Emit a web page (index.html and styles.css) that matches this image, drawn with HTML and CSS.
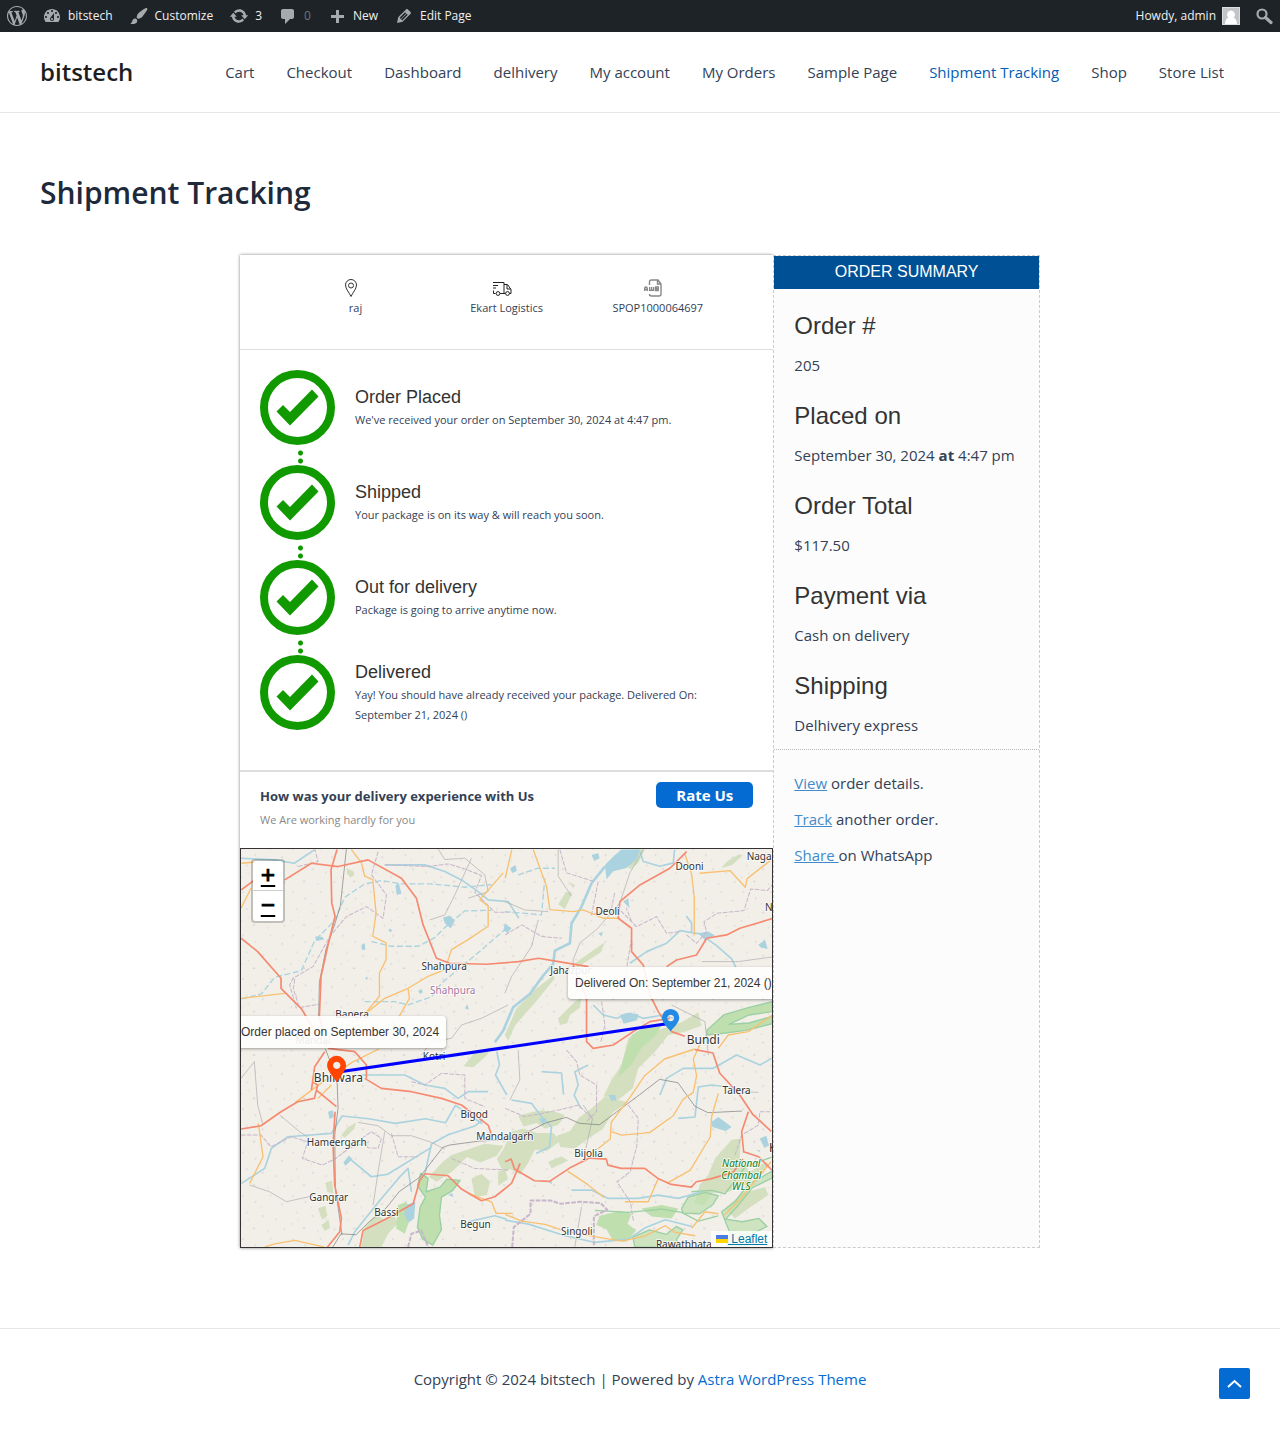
FILE: index.html
```html
<!DOCTYPE html>
<html lang="en">
<head>
<meta charset="utf-8">
<meta name="viewport" content="width=device-width, initial-scale=1">
<title>Shipment Tracking – bitstech</title>
<link rel="stylesheet" href="styles.css">
</head>
<body>
<nav class="adminbar" aria-label="Toolbar">
  <a class="ab-item" href="#" aria-label="About WordPress"><svg width="20" height="20" viewBox="0 0 20 20" fill="#a7aaad"><path d="M20 10c0-5.51-4.49-10-10-10S0 4.49 0 10s4.49 10 10 10 10-4.49 10-10zM7.78 15.37L4.37 6.22c.55-.02 1.17-.08 1.17-.08.5-.06.44-1.13-.06-1.11 0 0-1.45.11-2.37.11-.18 0-.37 0-.58-.01C4.12 2.69 6.87 1.11 10 1.11c2.33 0 4.45.87 6.05 2.34-.68-.11-1.65.39-1.65 1.58 0 .74.45 1.36.9 2.1.35.61.55 1.36.55 2.46 0 1.49-1.4 5-1.4 5l-3.03-8.37c.54-.02.82-.17.82-.17.5-.05.44-1.25-.06-1.22 0 0-1.44.12-2.38.12-.87 0-2.33-.12-2.33-.12-.5-.03-.56 1.2-.06 1.22l.92.08 1.26 3.41zM17.41 10c.24-.64.74-1.87.43-4.25.7 1.29 1.05 2.71 1.05 4.25 0 3.29-1.73 6.24-4.4 7.78.97-2.59 1.94-5.2 2.92-7.78zM6.1 18.09C3.12 16.65 1.11 13.53 1.11 10c0-1.3.23-2.48.72-3.59C3.25 10.3 4.67 14.2 6.1 18.09zm4.03-6.63l2.58 6.98c-.86.29-1.76.45-2.71.45-.79 0-1.57-.11-2.29-.33.81-2.38 1.62-4.74 2.42-7.1z"/></svg></a>
  <a class="ab-item" href="#"><svg width="20" height="20" viewBox="0 0 20 20" fill="#a7aaad"><path d="M3.76 16h12.48c1.1-1.37 1.76-3.11 1.76-5 0-4.42-3.58-8-8-8s-8 3.58-8 8c0 1.89.66 3.63 1.76 5zM10 4c.55 0 1 .45 1 1s-.45 1-1 1-1-.45-1-1 .45-1 1-1zM6 6c.55 0 1 .45 1 1s-.45 1-1 1-1-.45-1-1 .45-1 1-1zm8 0c.55 0 1 .45 1 1s-.45 1-1 1-1-.45-1-1 .45-1 1-1zm-5.370 5.550L12 7v6c0 1.100-.9 2-2 2s-2-.9-2-2c0-.57.24-1.080.63-1.450zM4 10c.55 0 1 .45 1 1s-.45 1-1 1-1-.45-1-1 .45-1 1-1zm12 0c.55 0 1 .45 1 1s-.45 1-1 1-1-.45-1-1 .45-1 1-1zm-5 3c0-.55-.45-1-1-1s-1 .45-1 1 .45 1 1 1 1-.45 1-1z"/></svg><span>bitstech</span></a>
  <a class="ab-item" href="#"><svg width="20" height="20" viewBox="0 0 20 20" fill="#a7aaad"><path d="M18.330 3.570s.27-.8-.31-1.360c-.53-.52-1.220-.24-1.220-.24-.61.3-5.760 3.470-7.670 5.570-.86.96-2.060 3.790-1.090 4.820.92.98 3.960-.17 4.790-1 2.060-2.060 5.210-7.170 5.500-7.790zM1.400 17.650c2.370-1.560 1.460-3.410 3.230-4.640.93-.65 2.220-.62 3.080.29.63.67.8 2.570-.16 3.460-1.570 1.450-4 1.550-6.150.89z"/></svg><span>Customize</span></a>
  <a class="ab-item" href="#"><svg width="20" height="20" viewBox="0 0 20 20" fill="#a7aaad"><path d="M10.200 3.280c3.530 0 6.430 2.610 6.920 6h2.080l-3.500 4-3.500-4h2.320c-.45-1.970-2.210-3.450-4.320-3.450-1.450 0-2.730.71-3.540 1.780L4.950 5.660C6.230 4.200 8.110 3.280 10.200 3.280zm-.4 13.440c-3.520 0-6.430-2.610-6.920-6H.8l3.500-4c1.170 1.330 2.330 2.670 3.500 4H5.480c.45 1.970 2.210 3.450 4.320 3.450 1.450 0 2.730-.71 3.540-1.780l1.710 1.950c-1.280 1.460-3.150 2.380-5.250 2.380z"/></svg><span>3</span></a>
  <a class="ab-item ab-muted" href="#"><svg width="20" height="20" viewBox="0 0 20 20" fill="#a7aaad"><path d="M5 3h9c1.100 0 2 .9 2 2v6c0 1.100-.9 2-2 2h-2l-5 5v-5H5c-1.100 0-2-.9-2-2V5c0-1.100.9-2 2-2z"/></svg><span>0</span></a>
  <a class="ab-item" href="#"><svg width="20" height="20" viewBox="0 0 20 20" fill="#a7aaad"><path d="M17 9v3h-5v5H9v-5H4V9h5V4h3v5h5z"/></svg><span>New</span></a>
  <a class="ab-item" href="#"><svg width="20" height="20" viewBox="0 0 20 20" fill="#a7aaad"><path d="M13.890 3.390l2.710 2.720c.46.46.42 1.240.030 1.640l-8.010 8.020-5.560 1.160 1.160-5.580s7.600-7.630 7.990-8.030c.39-.39 1.220-.39 1.680.070zm-2.730 2.790l-5.590 5.610 1.110 1.110 5.540-5.650zm-2.970 8.230l5.580-5.600-1.070-1.080-5.590 5.600z"/></svg><span>Edit Page</span></a>
  <a class="ab-item ab-user" href="#"><span>Howdy, admin</span><svg width="18" height="18" viewBox="0 0 18 18"><path fill="#c3c4c7" d="M0 0h18v18H0z"/><path fill="#fff" d="M9 3.500a4 4 0 0 1 2.500 7.100c2 .8 3.300 2.800 3.500 6.400H3c.2-3.600 1.500-5.600 3.500-6.400A4 4 0 0 1 9 3.500z"/><path fill="none" stroke="#ddd" d="M.5.5h17v17H.5z"/></svg></a>
  <a class="ab-item ab-search" href="#" aria-label="Search"><svg width="20" height="20" viewBox="0 0 20 20" fill="none" stroke="#a7aaad"><circle cx="8" cy="8" r="4.500" stroke-width="2.200"/><path d="M11.500 11.500l5.500 5" stroke-width="3.200" stroke-linecap="round"/></svg></a>
</nav>

<header class="site-header">
  <a class="brand" href="#">bitstech</a>
  <nav class="menu" aria-label="Site">
    <a href="#">Cart</a><a href="#">Checkout</a><a href="#">Dashboard</a><a href="#">delhivery</a><a href="#">My account</a><a href="#">My Orders</a><a href="#">Sample Page</a><a class="current" href="#" aria-current="page">Shipment Tracking</a><a href="#">Shop</a><a href="#">Store List</a>
  </nav>
</header>

<main class="content">
  <h1>Shipment Tracking</h1>
  <div class="tracking">
    <section class="shipment">
      <div class="facts">
        <div class="fact"><svg width="20" height="20" viewBox="0 0 20 20" fill="none" stroke="#333"><path d="M10 18.500C8.500 15 4.500 11 4.500 7a5.500 5.500 0 0 1 11 0c0 4-4 8-5.500 11.500z"/><circle cx="10" cy="7.500" r="2.500"/></svg><span>raj</span></div>
        <div class="fact"><svg width="20" height="20" viewBox="0 0 20 20" fill="none" stroke="#222"><path d="M1 4.500h11v11H8M1 7.500h5M1 10h3M1.500 12.500v3h2M12 6.500h3.500l3.500 5v4h-1.500M15 7v4h4M12 15.500h1.500"/><circle cx="6" cy="15.500" r="1.900"/><circle cx="15.500" cy="15.500" r="1.900"/></svg><span>Ekart Logistics</span></div>
        <div class="fact"><svg width="20" height="20" viewBox="0 0 20 20" fill="none" stroke="#888" stroke-width="1.400"><path d="M6.500 7V4q0-2 2-2H15l3 4v10q0 2-2 2H8.500q-2 0-2-2M14.500 2v4H18"/><path d="M1.700 13V10.500q0-1.500 1.200-1.500T4.300 10.500V13M1.700 11.500h2.600M6.700 9v3.400h4V9M8.700 9v3M12.700 9h2.500v3.500h-2.500zM12.700 10.800h2.500"/></svg><span>SPOP1000064697</span></div>
      </div>
      <ol class="steps">
        <li class="step"><svg class="tick" viewBox="0 0 75 75"><circle cx="37.500" cy="37.500" r="33.500"/><path d="M16.500 41.500L23 35l7 7 22-22.500 6.500 7L30 55.500z"/></svg><div><h2>Order Placed</h2><p>We've received your order on September 30, 2024 at 4:47 pm.</p></div></li>
        <li class="step"><svg class="tick" viewBox="0 0 75 75"><circle cx="37.500" cy="37.500" r="33.500"/><path d="M16.500 41.500L23 35l7 7 22-22.500 6.500 7L30 55.500z"/></svg><div><h2>Shipped</h2><p>Your package is on its way &amp; will reach you soon.</p></div></li>
        <li class="step"><svg class="tick" viewBox="0 0 75 75"><circle cx="37.500" cy="37.500" r="33.500"/><path d="M16.500 41.500L23 35l7 7 22-22.500 6.500 7L30 55.500z"/></svg><div><h2>Out for delivery</h2><p>Package is going to arrive anytime now.</p></div></li>
        <li class="step"><svg class="tick" viewBox="0 0 75 75"><circle cx="37.500" cy="37.500" r="33.500"/><path d="M16.500 41.500L23 35l7 7 22-22.500 6.500 7L30 55.500z"/></svg><div><h2>Delivered</h2><p>Yay! You should have already received your package. Delivered On: September 21, 2024 ()</p></div></li>
      </ol>
      <div class="feedback">
        <div><strong>How was your delivery experience with Us</strong><p>We Are working hardly for you</p></div>
        <button type="button">Rate Us</button>
      </div>
      <div class="map">
        <svg class="map-canvas" viewBox="9 12 1593 1194" preserveAspectRatio="xMidYMid slice" role="img" aria-label="Map of the route from Bhilwara to Bundi">
          <defs>
            <pattern id="speckle" width="150" height="130" patternUnits="userSpaceOnUse"><path fill="#d6d2cf" d="M12 10h5v4h-5zM50 28h4v5h-4zM95 8l6 4-4 3zM130 35h5v4h-5zM25 58l5 5-5 2zM72 70h5v5h-5zM112 80l5 3-4 4zM8 95h4v4H8zM45 108h6v4h-6zM88 116h4v4h-4zM138 108l5 5-6 2zM68 45h3v4h-3zM30 85h3v3h-3z"/></pattern>
          </defs>
          <rect x="9" y="12" width="1593" height="1194" fill="#f2efe9"/>
          <rect x="9" y="12" width="1593" height="1194" fill="url(#speckle)"/>

          <g class="wood">
            <path d="M325 70l20 8 4 12-12 8-10-12z"/>
            <path d="M1170 70l20-56h30l-20 40-22 18zM1448 70l20-22 35-20 10 4-32 28zM960 178l24-38 18 5-22 48zM1010 355l50-35 40-28-12 30-70 45zM800 570l35-80 60-60 50-38 5 8-50 62-70 80-20 45zM960 520l50-50 20-12-5 30-30 22-8 25-22 5zM990 110l20 10-4 10z"/>
            <path d="M676 664l30-38 55-20-15 25-40 36zM310 870l18-22 26-16-6 20-28 26z"/>
            <path d="M240 1090l22-8 6 30-16 12zM262 1013l20-6 4 38-18-4zM250 1140l22-16 4 24-16 10zM370 1206l10-60 34-36 26 14 24-20 16 30-30 32-20 40z"/>
            <path d="M1170 580l36-20 64-8 60-20 50-30 10 40-50 18-50 10-40 50-50 50-16 60-44 34-44-10 24-50 30-44z"/>
            <path d="M1100 756l70 16-46 30-30 50-44 28-40 30-44-4-10-34 40-14 26-40 36-26z"/>
            <path d="M840 812l40-10 30-6 40 4 30 10-20 30-40 10-24-16-40 10zM820 860l36-10 40 14 50 0 20 24-40 30-36-4-20 40-24 34-30-16-20 10-20-40 20-30zM930 950l40-16 20 12-50 24zM640 930l40-14 60-20 56 6-20 30-50 20-40-16-40 40-50 34-24-14 40-44zM700 1000l30-14 26 24-10 40-36 6zM780 980l20-8 10 30-30 20z"/>
            <path d="M1430 940l50-56 28-4-4 60 30 40 50-30 8 10-70 60-50 20-50 4-24 36-30-4 16-56 26-30zM1460 1090l50-44 70-20 10 24-60 40-40 30z"/>
          </g>
          <g class="reserve">
            <path d="M548 985l22 15-6 40 42-14 20-24 40 4-22 30-34 20-6 54 6 44-26 46-30-18-16-36 8-60 16-30-24-34z"/>
            <path d="M480 1080l26-10 10 50-16 46-26-16z" stroke="none"/>
            <path d="M1406 556l50-46 74-22 72-18v30l-70 10-60 28 60-4 70-20v22l-80 20-60 8-56 6z"/>
            <path stroke="none" d="M1180 570l40-24 50-6-20 34-40 34-30 50-40 40 16-60z"/>
            <path stroke="none" d="M1084 1112l60-14 36 8-12 30 26 20-30 34-40-4-20-34-30-12zM1210 1090l60-10 50 10-20 30-60-6z"/>
            <path fill-opacity=".7" d="M1190 1206l-6-30 50-22 50 14 30-24 20 10-20 30 10 22zM1330 1090l20-34 50-14 40 10-16 26-40 28-50-2zM1450 1100l40-30 40-52 72-40v20l-60 30-40 50-40 44 50 8 50-10 24 24-40 20-20 40-60 2 10-40z"/>
            <path fill="none" d="M1360 1040l60-4 40 10 60-80 80-30M1070 1096l100 6 100-10 60 10 50 26 60-16"/>
          </g>
          <g class="lake">
            <path d="M1100 60l30-30 20-16h55l-10 30-30 25-40 10-20 24zM615 218l20-6 15 15-12 24-18-16zM472 122l10-8 8 32-14 4zM1380 265l30-5 20 12-30 14zM1145 510l20-6 36 4-5 18-40 10zM232 274l22 2 4 8-24 4zM800 235l20 15-12 14-12-8zM1560 300l20-16 8 28-20-4zM270 800l14-4 4 18-14 8zM316 952l16-20 12 10-22 20zM1420 830l20-14 40 30-18 12-40-12zM504 1080l28-10-4 50-16 12-14-24zM1155 170l15-10 4 30zM1060 30l20-6 4 16-16 8zM816 70l16-10 4 18-14 6zM370 300l10-6 2 20-10 2zM380 400l8-5v10zM540 438l10-6 4 10-8 5zM450 255l8-4 4 8-6 2zM680 490l8-12 4 16zM630 1050l12-6 4 12zM1564 880l20-8 8 30-14 6zM1110 750l20 0 6 16-16 2zM900 820l24 0-8 20zM1555 915l8 0 4 8zM1080 265l14-4-4 14zM930 1010l10-2 2 10zM450 536l6 10-6 6zM354 650l8-8 2 12z"/>
          </g>

          <g class="river">
            <path d="M9 40l100 5 60 10 60-40M440 60l60 0 60 0 60 20 50 25 50 35 30 25 60 5 32 50"/>
            <path stroke-width="8" d="M1100 65l-40 50-30 70-30 50-5 60-45 22-5 40-30 35-40 55-50 40-30 70-25 35"/>
            <path d="M1175 355l50-35 60-25 40-38 60 10 50 35 45 40 15 30M1360 265l0-30-16-22M1065 480l30 30 40 10 40-15 40 15 60-10 30 10"/>
            <path d="M10 1015l70-45 20-60 50-35 130-10 32-52 80 8 80 14 90-14 60 12 30-52 80 55M560 987l20-90 50-28 80-26 24-20M370 690l80 0 50 0 60 30 60 10 40 30 30-20 60 0M776 620l8 40-12 30 34 60"/>
            <path d="M340 945l60 50 50-8 130-80M330 1200l20-40 80-100 60-70 20-20 10 70"/>
            <path d="M820 765l60 10 30 40 30 30-6 60-40 20M910 680l60 4 6 65M1050 660l-40 20 10 40-12 30 20 40M1265 750l20-50 50-30 90 0 70-40 70 30 105-60M1320 820l50-4 10-90 40-6 50 6 60 20M1000 1035l60 0 50 25 90 0 60-10 60 10 70-20"/>
            <path d="M801 1125l70 12 110 35 90 20 100-10 50-34 60-24 80 20M690 1130l80-18 35 10M1205 20l10 30 50 14 40-10 4-40"/>
          </g>
          <g class="stream">
            <path d="M10 462l60-15 40-50 80-20 40-90 60-60 30-70 60-40 50-10 60 10 90 0 100 10 80-8M380 470l90 0 40 10 70-25 30-40 60-50 60-50 80-70M400 290l60 14 80 0 50-26 30-30 60-50 80-2M840 90l60-20 50 0M800 200l110 10 10-110"/>
          </g>

          <g class="boundary">
            <path d="M180 65l60-15-10-38M420 20l-20 70 45 60-10 70-50-35-60 30-50 60-50 90-60 35-10 20 20 70M440 60l130 5 60-8 50 15 50 20-20 50 60 60 40 0M170 402l-4 30 18 56 60-10"/>
            <path d="M9 870l60 0 30 35 60-30 50 15-16 50 60 20 40-20 40-30 60-20M370 880l30-20 30 20-10 30-30-2zM460 865l20 70 60 0M520 710l40 10 50-35 70 5 0 70 60 25M640 940l70 30 100 5"/>
            <path d="M965 14l20 70 80 25M801 270l50-30 60 35 60 5M1080 110l-20 100 60-20 10-50M1180 230l-16-42M1135 185l60 60 60-30 30 50 40-5M1345 270l30 25 30-35-8-30 40-25 80-8 20-65 50 5 35-40M1160 400l20-120M1090 470l10 70-12 50M985 615l30 35 10 40 50 30 0 80-30 30M801 790l60 25 100-20 60-15 40 40M1170 780l30 40-4 80-20 80-40 30 40 60 10 60M1490 930l20-60 50-30 5-40 30 0"/>
            <path stroke-width="6" d="M822 1206l5-60 50-40 0-40 60 0 30 10 60-6 60 4 20 20-40 20 0 90M510 1206l10-40 30-10 20 50"/>
          </g>

          <g class="track">
            <path d="M600 12l20 32 60-4 60 50 10 50-60 20M700 40l-50 110-30 60-45 15M800 170l60 25 70 5M1215 14l-40 70-30 90-70 80-50 40-20 50 0 60M900 225l-20 80-60 90-20 50M1390 350l110 0 102-14M810 480l-80 40-60 20-30 40-60 10-30 40M960 14l0 80 40 60M1300 480l100 50 10 100M1520 740l40 2M1035 780l28 40-20 90M440 860l-20 120-15 100M125 810l60 50 30 20M360 832l60 10 40 30 60 0 60 20 40 20M9 700l40-50 10 130 16 60M35 1020l60 20 50 30 80-18M840 615l5 90-30 60M1030 1085l-20 120"/>
            <path stroke="#777" d="M325 12l-18 170-15 50-28 80-20 100-2 100M284 1206l25-40 45 3 40-40 50-40 40-50 60-42 70-90 20-7 90-12 90-5 50-20 60-30 60-16 40 18 60 4 120-90 60-46 55 10 50 70 40 20 102-5M262 612l35 90M297 700l3 90-10 80 2 160 20 140"/>
          </g>

          <g class="minor">
            <path d="M10 55l60-5M340 14l30 40 10 40 24 10 10 100-10 70 40 20 0 50-20 40 0 70-50 60-50 30M390 500l50-40 70-30 60-36 50-20 20-60 50-30 60-40 0-60-25-20 70-80M510 430l4 30-34 60"/>
            <path d="M10 460l130-15M9 190l30-60M801 100l20-86M885 14l40 110 10 70 70 6 30-5 60 25 50 0M1340 28l20 60 8 70 0 112M1385 85l90-8 46 50 5-25 76-60"/>
            <path d="M172 772l80-60 90-60 80-40M240 760l40-40M35 1015l40-80-14-100M80 1206l30-10 60-10 90 20M690 1045l70 25 14 35 50 0M1078 912l38-30 3-50 60-80 40-60 60-50 90-30M1120 860l30 10 60-5 25-3 70-50 30-50 30-20 10-50-10-50 30-65M1440 745l-20 70-4 60-60 100-70 40M988 978l60 40 50 40M1160 1070l70 0 30-70M1458 1110l50-50 40-50 50-60M1440 610l30-40 60-10 72-50M1360 1150l40-50 40 6"/>
            <path d="M801 1108l50 20 70 10 60 20 110 20 60 10 70-16 60-30 30 20 60 10"/>
          </g>
          <g class="major">
            <path d="M10 135l40-30M140 105l80-50 80 10 90-20 100 55 45 60 20 80 40 100 40 15 110 3 96-8 60-10 60 10 90 15M9 280l50 40 70 80 0 30 60 60 40 65M297 14l-18 60 2 100 10 40-22 90-20 90-5 120 20 90"/>
            <path d="M1345 20l-50 50-90 50-60 50-5 50 40 30 0 70 35 40 20 90 25 50 40 60 40 14M1285 365l30-20 60-15 30-50 60-10 40-20 100-30"/>
            <path d="M1005 360l40 100 0 130 20 20 60-10 60-40 50-30 60-10M9 852l60-10 60-42 50-30 50-10 10-40-16-10M380 700l50 30 90 10 90 20 60 20 80 60 10 30M235 735l60 50M220 735l10-70 30-45M270 610l80 10 35 40 0 40M291 800l-6 100 5 120 20 100-5 40-48 60M365 1206l10-50 60-30 90-50 20-70 15-20 70 6 40 40 60 35 40-12 50-40 26-60"/>
            <path d="M801 950l18-8 10 30 60 35 45 2 60-40 60-30 50 3 5 18 40 10 70 0 40 30 40 18 60 8 15-16 40-8 70-20 30-40M1370 614l54 10 20 60 60 65 40 60 55 50M1530 800l-20 60 6 60 45 15 40 40"/>
          </g>

          <g class="labels">
            <text x="618" y="376">Shahpura</text><text x="644" y="446" fill="#a877a4">Shahpura</text>
            <text x="342" y="518">Banera</text><text x="225" y="596">Mandal</text>
            <text x="1354" y="76">Dooni</text><text x="1525" y="44" text-anchor="start">Nagar</text>
            <text x="1108" y="210">Deoli</text><text x="1580" y="199" text-anchor="start">Nainwa</text>
            <text x="998" y="386">Jahazpur</text><text class="city" x="1395" y="598">Bundi</text>
            <text x="588" y="646">Kotri</text><text class="city" x="301" y="712">Bhilwara</text>
            <text x="708" y="818">Bigod</text><text x="800" y="884">Mandalgarh</text>
            <text x="296" y="904">Hameergarh</text><text x="272" y="1069">Gangrar</text>
            <text x="445" y="1114">Bassi</text><text x="712" y="1148">Begun</text>
            <text x="1495" y="748">Talera</text><text x="1051" y="937">Bijolia</text>
            <text x="1016" y="1169">Singoli</text><text x="1337" y="1209">Rawatbhata</text>
            <text class="city" x="1592" y="922" text-anchor="start">Kota</text>
            <g class="park"><text x="1509" y="966">National</text><text x="1509" y="1001">Chambal</text><text x="1509" y="1036">WLS</text></g>
          </g>
          <path d="M296 682L1296 535" stroke="#00f" stroke-width="9"/>
          <path fill="#ff4500" fill-rule="evenodd" d="M296 713c-7-16-29-33-29-52a28 28 0 0 1 57 0c0 19-21 36-28 52zM296 650a11 11 0 1 0 .1 0z"/>
          <path fill="#2489e4" fill-rule="evenodd" d="M1297 559c-7-11-26-25-26-41a26 26 0 0 1 52 0c0 16-19 30-26 41zM1297 509a10 10 0 1 0 .1 0z"/>
        </svg>
        <div class="zoom-control"><a href="#" aria-label="Zoom in">+</a><a href="#" aria-label="Zoom out">−</a></div>
        <div class="tip tip-start">Order placed on September 30, 2024</div>
        <div class="tip tip-end">Delivered On: September 21, 2024 ()</div>
        <div class="attribution"><a href="#"><svg width="12" height="8" viewBox="0 0 12 8"><path fill="#4c7be1" d="M0 0h12v4H0z"/><path fill="#ffd500" d="M0 4h12v4H0z"/></svg> Leaflet</a></div>
      </div>
    </section>

    <aside class="summary">
      <h2>ORDER SUMMARY</h2>
      <dl>
        <dt>Order #</dt><dd>205</dd>
        <dt>Placed on</dt><dd>September 30, 2024 <b>at</b> 4:47 pm</dd>
        <dt>Order Total</dt><dd>$117.50</dd>
        <dt>Payment via</dt><dd>Cash on delivery</dd>
        <dt>Shipping</dt><dd>Delhivery express</dd>
      </dl>
      <div class="actions">
        <p><a href="#">View</a> order details.</p>
        <p><a href="#">Track</a> another order.</p>
        <p><a href="#">Share </a>on WhatsApp</p>
      </div>
    </aside>
  </div>
</main>

<footer class="site-footer">
  <p>Copyright © 2024 bitstech | Powered by <a href="#">Astra WordPress Theme</a></p>
  <a class="to-top" href="#" aria-label="Scroll to top"><svg width="15" height="9" viewBox="0 0 15 9" fill="none" stroke="#fff" stroke-width="2"><path d="M1 8l6.500-6L14 8"/></svg></a>
</footer>
</body>
</html>
```
FILE: styles.css
```css
* { box-sizing: border-box; }
body {
  margin: 0;
  font: 15px/24px "Open Sans", "Noto Sans", sans-serif;
  color: #334155;
  background: #fff;
}
h1, h2, p, ol, dl, dd { margin: 0; padding: 0; }
a { color: #046bd2; text-decoration: none; }
svg { display: block; flex: none; }

/* Admin toolbar */
.adminbar {
  display: flex;
  height: 32px;
  background: #1d2327;
  font-size: 12px;
  line-height: 32px;
}
.ab-item {
  display: flex;
  align-items: center;
  gap: 6px;
  padding: 0 8px;
  color: #f0f0f1;
}
.ab-item:first-child { padding: 0 7px; }
.ab-muted { color: #a7aaad; }
.ab-muted span { opacity: .6; }
.ab-user { margin-left: auto; }
.ab-search { padding: 0 6px; }

/* Site header */
.site-header {
  display: flex;
  align-items: center;
  justify-content: space-between;
  min-height: 81px;
  padding: 0 40px;
  border-bottom: 1px solid #e6e6e6;
}
.brand { font-size: 24px; font-weight: 600; line-height: 32px; color: #1e1e1e; }
.menu { display: flex; }
.menu a { padding: 0 16px; color: #334155; white-space: nowrap; }
.menu .current { color: #045cb4; }

/* Page */
.content { max-width: 1280px; margin: 0 auto; padding: 60px 40px 80px; }
h1 { font-size: 30px; font-weight: 600; line-height: 40px; color: #1e293b; }
.tracking {
  display: grid;
  grid-template-columns: 2fr 1fr;
  max-width: 800px;
  margin: 42px auto 0;
}
.shipment { box-shadow: 0 0 3px rgba(0, 0, 0, .5); }
.facts {
  display: grid;
  grid-template-columns: repeat(3, 1fr);
  padding: 23px 40px 31px;
  border-bottom: 1px solid #ddd;
  font-size: 11px;
  line-height: 20px;
  text-align: center;
}
.fact { display: flex; flex-direction: column; align-items: center; }
.fact svg { margin-right: 10px; }

.steps {
  display: flex;
  flex-direction: column;
  gap: 20px;
  padding: 20px 20px 40px;
  border-bottom: 2px solid #ddd;
  list-style: none;
}
.step { display: flex; align-items: center; gap: 20px; position: relative; min-height: 75px; }
.tick { width: 75px; height: 75px; fill: #119a00; }
.tick circle { fill: none; stroke: #119a00; stroke-width: 8; }
.step:not(:last-child)::after {
  content: "";
  position: absolute;
  left: 38px;
  top: 79px;
  width: 5px;
  height: 15px;
  background: radial-gradient(circle, #119a00 2px, transparent 3px) 0 0 / 5px 8px repeat-y;
}
.step h2 { font: 18px/25px "Liberation Sans", sans-serif; color: #333; }
.step p { font-size: 11px; line-height: 20px; }

.feedback {
  display: flex;
  justify-content: space-between;
  align-items: flex-start;
  padding: 10px 20px 18px;
}
.feedback strong { display: block; font-size: 13px; line-height: 28px; }
.feedback p { font-size: 11px; line-height: 20px; color: #888; }
.feedback button {
  padding: 0 20px;
  border: 0;
  border-radius: 5px;
  background: #046bd2;
  color: #fff;
  font: bold 15px/26px "Open Sans", sans-serif;
}

/* Map */
.map {
  position: relative;
  height: 400px;
  overflow: hidden;
  border: 1px solid #333;
  background: #f2efe9;
  font: 12px/18px "Liberation Sans", sans-serif;
}
.map-canvas { width: 100%; height: 100%; fill: none; stroke-linejoin: round; }
.wood { fill: #d3dfbf; }
.reserve { fill: #bfdfae; stroke: #9bcfa4; stroke-width: 4; }
.lake { fill: #aad3df; }
.river { stroke: #aad3df; stroke-width: 5; }
.stream { stroke: #aad3df; stroke-width: 4; stroke-dasharray: 18 8; }
.boundary { stroke: #c8b6cb; stroke-width: 3; stroke-dasharray: 14 4; }
.track { stroke: #aaa; stroke-width: 2; }
.minor { stroke: #f8c070; stroke-width: 4; }
.major { stroke: #f58a70; stroke-width: 5; }
.labels {
  fill: #333;
  stroke: #fff;
  stroke-opacity: .7;
  stroke-width: 6;
  paint-order: stroke;
  font: 30px "Noto Sans", sans-serif;
  text-anchor: middle;
}
.labels .city { font-size: 36px; }
.park { fill: #118020; font-style: italic; }
.zoom-control {
  position: absolute;
  left: 10px;
  top: 10px;
  border: 2px solid rgba(0, 0, 0, .2);
  border-radius: 4px;
  background: #fff;
  background-clip: padding-box;
}
.zoom-control a {
  display: block;
  width: 30px;
  height: 30px;
  color: #000;
  font: 24px/32px "Liberation Mono", monospace;
  -webkit-text-stroke: 1px #000;
  text-align: center;
  text-decoration: underline;
}
.zoom-control a:first-child { border-bottom: 1px solid #ccc; }
.tip {
  position: absolute;
  padding: 6px;
  border: 1px solid #fff;
  border-radius: 3px;
  background: #fff;
  box-shadow: 0 1px 3px rgba(0, 0, 0, .4);
  color: #222;
  opacity: .9;
  white-space: nowrap;
}
.tip-start { left: -7px; top: 167px; }
.tip-end { left: 327px; top: 118px; }
.attribution {
  position: absolute;
  right: 0;
  bottom: 0;
  padding: 0 5px;
  background: rgba(255, 255, 255, .8);
  line-height: 16px;
}
.attribution a { color: #0078a8; text-decoration: underline; }
.attribution svg { display: inline; }

/* Order summary */
.summary { border: 1px dashed #ccc; background: #fcfcfc; }
.summary h2 {
  padding-bottom: 2px;
  background: #005096;
  color: #fff;
  font: 16px/31px "Liberation Sans", sans-serif;
  text-align: center;
}
.summary dl { padding: 21px 20px 0; border-bottom: 1px dotted #bbb; }
.summary dt { font: 24px/32px "Liberation Sans", sans-serif; color: #333; }
.summary dd { padding: 11px 0 23px; white-space: nowrap; }
.summary dd:last-child { padding-bottom: 12px; }
.actions { padding: 21px 20px; }
.actions p { margin-bottom: 12px; }
.actions a { color: #428bca; text-decoration: underline; }

/* Footer */
.site-footer { padding: 38px 30px; border-top: 1px solid #e6e6e6; text-align: center; }
.to-top {
  display: grid;
  place-items: center;
  position: fixed;
  right: 30px;
  bottom: 30px;
  width: 31px;
  height: 31px;
  border-radius: 2px;
  background: #046bd2;
}
```
